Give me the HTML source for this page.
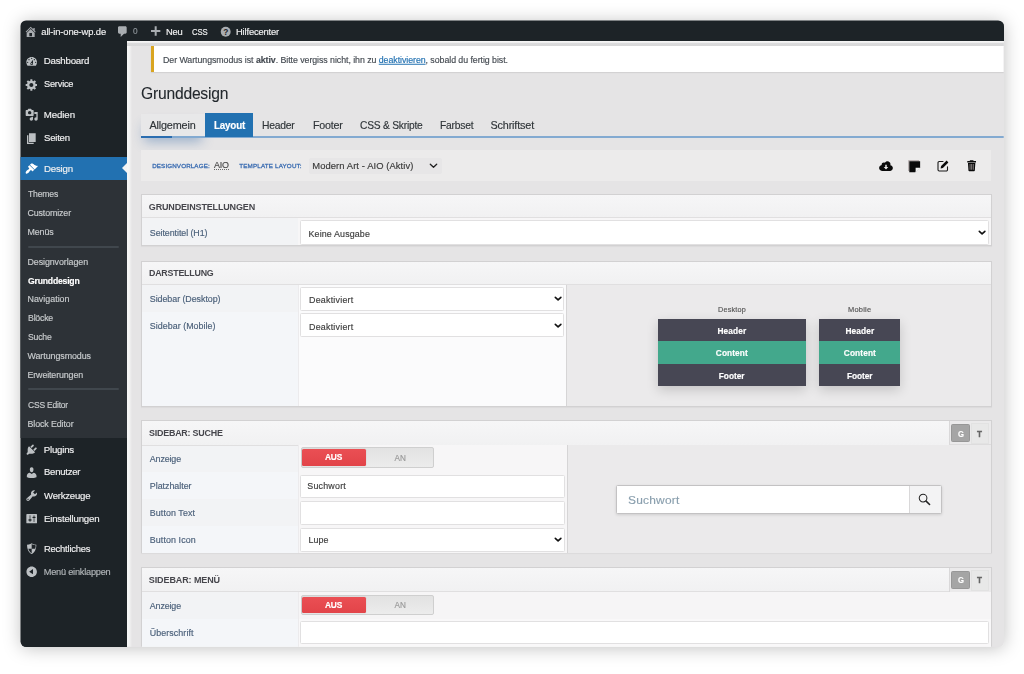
<!DOCTYPE html>
<html lang="de"><head><meta charset="utf-8"><title>Grunddesign</title>
<style>
*{box-sizing:border-box;margin:0;padding:0}
html,body{width:1024px;height:674px;overflow:hidden;background:#fff}
body{font-family:"Liberation Sans",sans-serif;position:relative;-webkit-font-smoothing:antialiased}
#shadow{position:absolute;left:20.5px;top:20.5px;width:983.2px;height:626.3px;border-radius:5.5px;background:linear-gradient(#1d2327 20.5px,rgba(0,0,0,0) 20.5px),linear-gradient(90deg,#1d2327 106.5px,#e4e3e4 106.5px);box-shadow:0 1px 18px rgba(0,0,0,.25)}
.abs{position:absolute}
.t{position:absolute;white-space:nowrap;line-height:14px;height:14px;-webkit-text-stroke:.16px}
.panel{position:absolute;border:1px solid #d2d1d2;background:#f7f6f7;box-shadow:0 1px 1px rgba(0,0,0,.04)}
.inp{position:absolute;background:#fff;border:1px solid #e1e0e1;border-radius:1.5px}
svg{position:absolute;overflow:visible}
</style></head><body>
<div id="shadow"></div>
<div id="app" style="position:absolute;left:0;top:0;width:1024px;height:674px;clip-path:inset(20.5px 20.3px 27.2px 20.5px round 5.5px)">
<div class="abs" style="left:127px;top:41px;width:877px;height:607px;background:#e5e4e5"></div>
<div class="abs" style="left:127px;top:41px;width:5px;height:607px;background:linear-gradient(90deg,#f7f7f7 0,#f5f5f5 40%,#e5e4e5 100%)"></div>
<div class="abs" style="left:20px;top:20px;width:984px;height:21px;background:#1d2327"></div>
<div class="abs" style="left:20px;top:41px;width:107px;height:607px;background:#1d2327"></div>
<div class="abs" style="left:20px;top:157px;width:107px;height:23px;background:#2271b1"></div>
<div class="abs" style="left:20px;top:180px;width:107px;height:258px;background:#2d3237"></div>
<div class="abs" style="left:121.6px;top:162.6px;width:0;height:0;border-top:5.9px solid transparent;border-bottom:5.9px solid transparent;border-right:5.6px solid #f3f3f3"></div>
<div class="abs" style="left:27.5px;top:246px;width:91.0px;height:2px;background:#40474d;border-radius:1px"></div>
<div class="abs" style="left:27.5px;top:388.3px;width:91.0px;height:2.0px;background:#40474d;border-radius:1px"></div>
<div class="abs" style="left:127px;top:41px;width:877px;height:5px;background:linear-gradient(#f6f6f6 0,#f2f2f2 28%,#dbdbdc 42%,#d8d8d9 100%)"></div>
<div class="abs" style="left:150.7px;top:45.5px;width:853.3px;height:26.5px;background:#fff;border-left:3px solid #d9a521;box-shadow:0 1px 1px rgba(0,0,0,.08)"></div>
<div class="abs" style="left:141px;top:113.5px;width:63.5px;height:23.5px;background:#e8e8e9;box-shadow:0 8px 12px -3px rgba(60,110,170,.42)"></div>
<div class="abs" style="left:141px;top:135.8px;width:863px;height:1.8px;background:linear-gradient(#9cb9d6,#6a9bcc 50%,#9cb9d6)"></div>
<div class="abs" style="left:141px;top:135.5px;width:31px;height:2.3px;background:#2a6db0"></div>
<div class="abs" style="left:204.7px;top:113px;width:48.3px;height:24px;background:#2271b1"></div>
<div class="abs" style="left:141px;top:150px;width:850px;height:30.5px;background:#ecebeb"></div>
<div class="abs" style="left:308.5px;top:158px;width:133.0px;height:16px;background:#e7e6e7;border-radius:2px"></div>
<div class="abs" style="left:214.3px;top:169.3px;width:14.7px;height:1.0px;border-top:1px dotted #6a6a6a"></div>
<div class="panel" style="left:141px;top:193.7px;width:850.5px;height:52.7px;"></div>
<div class="abs" style="left:142px;top:194.7px;width:848.5px;height:23.7px;background:linear-gradient(#f6f6f7,#f1f1f2);border-bottom:1px solid #e0dfe0"></div>
<div class="abs" style="left:142px;top:218.4px;width:156px;height:27.0px;background:#f2f3f5"></div>
<div class="inp" style="left:299.5px;top:220px;width:689.8px;height:24.5px;"></div>
<div class="panel" style="left:141px;top:260.5px;width:850.5px;height:146.0px;"></div>
<div class="abs" style="left:142px;top:261.5px;width:848.5px;height:23.0px;background:linear-gradient(#f6f6f7,#f1f1f2);border-bottom:1px solid #e0dfe0"></div>
<div class="abs" style="left:142px;top:284.5px;width:156px;height:27.0px;background:#f2f3f5"></div>
<div class="abs" style="left:142px;top:311.5px;width:156px;height:94.0px;background:#f4f6f9"></div>
<div class="abs" style="left:298px;top:284.5px;width:268px;height:121.0px;background:#fbfbfc;border-left:1px solid #ecebed"></div>
<div class="abs" style="left:566px;top:284.5px;width:424.5px;height:121.0px;background:#ebeaeb;border-left:1px solid #d6d5d6"></div>
<div class="inp" style="left:299.5px;top:287px;width:264.8px;height:23.5px;"></div>
<div class="inp" style="left:299.5px;top:313.4px;width:264.8px;height:24.1px;"></div>
<div class="abs" style="left:657.7px;top:319px;width:148.3px;height:66.8px;background:#474754;box-shadow:0 4px 11px rgba(0,0,0,.17)"></div>
<div class="abs" style="left:657.7px;top:341.3px;width:148.3px;height:22.7px;background:#43a88c"></div>
<div class="abs" style="left:819.3px;top:319px;width:80.7px;height:66.8px;background:#474754;box-shadow:0 4px 11px rgba(0,0,0,.17)"></div>
<div class="abs" style="left:819.3px;top:341.3px;width:80.7px;height:22.7px;background:#43a88c"></div>
<div class="panel" style="left:141px;top:420.3px;width:850.5px;height:133.2px;"></div>
<div class="abs" style="left:142px;top:421.3px;width:848.5px;height:24.7px;background:linear-gradient(#f6f6f7,#f1f1f2);border-bottom:1px solid #e0dfe0"></div>
<div class="abs" style="left:142px;top:446px;width:156px;height:26px;background:#f2f3f5"></div>
<div class="abs" style="left:142px;top:472px;width:156px;height:27px;background:#f4f6f9"></div>
<div class="abs" style="left:142px;top:499px;width:156px;height:27px;background:#f2f3f5"></div>
<div class="abs" style="left:142px;top:526px;width:156px;height:26.5px;background:#f4f6f9"></div>
<div class="abs" style="left:298px;top:445px;width:268.5px;height:107.5px;background:#f7f6f7;border-left:1px solid #ecebed"></div>
<div class="abs" style="left:566.5px;top:445px;width:424.0px;height:107.5px;background:#ebeaeb;border-left:1px solid #d6d5d6"></div>
<div class="abs" style="left:300.5px;top:447.4px;width:133.3px;height:20.2px;background:linear-gradient(#e2e2e2,#ececec);border:1px solid #cfcfcf;border-radius:2px"></div>
<div class="abs" style="left:302.2px;top:449.09999999999997px;width:63.8px;height:16.8px;background:linear-gradient(#ea4f54,#e24449);border-radius:1.5px;box-shadow:0 0 1px rgba(0,0,0,.3)"></div>
<div class="inp" style="left:299.5px;top:475px;width:265.0px;height:22.7px;"></div>
<div class="inp" style="left:299.5px;top:501px;width:265.0px;height:23.6px;"></div>
<div class="inp" style="left:299.5px;top:527.5px;width:265.0px;height:24.3px;"></div>
<div class="abs" style="left:948.5px;top:421.3px;width:42.0px;height:24.2px;background:#ebeaeb;border-left:1px solid #d9d8d9;border-bottom:1px solid #dddcdd"></div>
<div class="abs" style="left:951.3px;top:424.0px;width:18.4px;height:17.9px;background:#a5a5a5;border:1px solid #979797;border-radius:1.5px"></div>
<div class="abs" style="left:970.7px;top:422.5px;width:18.5px;height:21.0px;background:#e8e8e8;border:1px solid #e2e2e2"></div>
<div class="abs" style="left:616.2px;top:485px;width:325.6px;height:28.5px;background:#fff;border:1px solid #c3c2c3;border-radius:1.5px;box-shadow:0 1px 3px rgba(0,0,0,.12)"></div>
<div class="abs" style="left:909px;top:486px;width:31.8px;height:26.5px;background:#f3f3f4;border-left:1px solid #d9d8d9"></div>
<div class="panel" style="left:141px;top:567.4px;width:850.5px;height:92.6px;"></div>
<div class="abs" style="left:142px;top:568.4px;width:848.5px;height:23.6px;background:linear-gradient(#f6f6f7,#f1f1f2);border-bottom:1px solid #e0dfe0"></div>
<div class="abs" style="left:948.5px;top:568.4px;width:42.0px;height:24.2px;background:#ebeaeb;border-left:1px solid #d9d8d9;border-bottom:1px solid #dddcdd"></div>
<div class="abs" style="left:951.3px;top:571.1px;width:18.4px;height:17.9px;background:#a5a5a5;border:1px solid #979797;border-radius:1.5px"></div>
<div class="abs" style="left:970.7px;top:569.6px;width:18.5px;height:21.0px;background:#e8e8e8;border:1px solid #e2e2e2"></div>
<div class="abs" style="left:142px;top:592px;width:156px;height:27px;background:#f2f3f5"></div>
<div class="abs" style="left:142px;top:619px;width:156px;height:40px;background:#f4f6f9"></div>
<div class="abs" style="left:298px;top:592px;width:692.5px;height:27px;background:#f6f5f6;border-left:1px solid #ecebed"></div>
<div class="abs" style="left:298px;top:619px;width:692.5px;height:40px;background:#f9f8f9;border-left:1px solid #ecebed"></div>
<div class="abs" style="left:300.5px;top:595px;width:133.3px;height:20.2px;background:linear-gradient(#e2e2e2,#ececec);border:1px solid #cfcfcf;border-radius:2px"></div>
<div class="abs" style="left:302.2px;top:596.7px;width:63.8px;height:16.8px;background:linear-gradient(#ea4f54,#e24449);border-radius:1.5px;box-shadow:0 0 1px rgba(0,0,0,.3)"></div>
<div class="inp" style="left:299.5px;top:620.5px;width:689.2px;height:23.4px;"></div>
<svg viewBox="0 0 20 20" style="left:24.32px;top:24.62px;width:13.36px;height:13.36px" fill="#a9adb1"><path d="M16 8.5l1.53 1.53-1.06 1.06L10 4.62l-6.47 6.47-1.06-1.06L10 2.5l4 4v-2h2v4zm-6-2.46l6 5.99V18H4v-5.97zM12 17v-5H8v5h4z"/></svg>
<svg viewBox="0 0 20 20" style="left:115.62px;top:24.62px;width:13.36px;height:13.36px" fill="#a9adb1"><path d="M5 2h9c1.1 0 2 .9 2 2v7c0 1.1-.9 2-2 2h-2l-5 5v-5H5c-1.1 0-2-.9-2-2V4c0-1.1.9-2 2-2z"/></svg>
<svg viewBox="0 0 20 20" style="left:148.82px;top:24.82px;width:13.36px;height:13.36px" fill="#a9adb1"><path d="M17 7.5v3h-5.5V16h-3v-5.500H3v-3h5.500V2h3v5.500H17z"/></svg>
<svg viewBox="0 0 20 20" style="left:219.0px;top:24.5px;width:13.4px;height:13.4px"><circle cx="10" cy="10" r="7.4" fill="#a9adb1"/><text x="10" y="14.600" text-anchor="middle" font-family="Liberation Sans, sans-serif" font-weight="700" font-size="12.500" fill="#1d2327">?</text></svg>
<svg viewBox="0 0 20 20" style="left:24.82px;top:54.62px;width:13.36px;height:13.36px" fill="#bcc0c3"><path d="M3.76 16h12.48c1.1-1.37 1.76-3.11 1.76-5 0-4.42-3.58-8-8-8s-8 3.58-8 8c0 1.89.66 3.63 1.760 5zM10 4c.55 0 1 .45 1 1s-.45 1-1 1-1-.45-1-1 .45-1 1-1zM6 6c.55 0 1 .45 1 1s-.45 1-1 1-1-.45-1-1 .45-1 1-1zm8 0c.55 0 1 .45 1 1s-.45 1-1 1-1-.45-1-1 .45-1 1-1zm-5.37 5.55L12 7v6c0 1.1-.9 2-2 2s-2-.9-2-2c0-.57.24-1.080.63-1.45zM4 10c.55 0 1 .45 1 1s-.45 1-1 1-1-.45-1-1 .45-1 1-1zm12 0c.55 0 1 .45 1 1s-.45 1-1 1-1-.45-1-1 .45-1 1-1zm-5 3c0-.55-.45-1-1-1s-1 .45-1 1 .45 1 1 1 1-.45 1-1z"/></svg>
<svg viewBox="0 0 20 20" style="left:24.82px;top:77.62px;width:13.36px;height:13.36px" fill="#bcc0c3"><path d="M18 12h-2.180c-.17.7-.44 1.35-.81 1.93l1.540 1.540-2.100 2.100-1.540-1.540c-.58.36-1.23.63-1.910.79V19H8v-2.180c-.68-.16-1.330-.43-1.910-.79l-1.540 1.540-2.120-2.120 1.540-1.540c-.36-.58-.63-1.230-.79-1.910H1V9.030h2.170c.16-.7.44-1.350.8-1.940L2.430 5.550l2.100-2.100 1.540 1.540c.58-.37 1.240-.64 1.930-.81V2h3v2.180c.68.16 1.330.43 1.910.79l1.540-1.540 2.120 2.120-1.540 1.540c.36.59.63 1.240.79 1.930H18V12zm-8.500 1.500c1.660 0 3-1.340 3-3s-1.340-3-3-3-3 1.340-3 3 1.340 3 3 3z"/></svg>
<svg viewBox="0 0 20 20" style="left:24.82px;top:108.02px;width:13.36px;height:13.36px" fill="#bcc0c3"><path d="M13 11V4c0-.55-.45-1-1-1h-1.670L9 1H5L3.670 3H2c-.55 0-1 .45-1 1v7c0 .55.45 1 1 1h10c.55 0 1-.45 1-1zM7 4.500c1.380 0 2.500 1.120 2.500 2.500S8.380 9.500 7 9.500 4.500 8.380 4.500 7 5.620 4.500 7 4.500zM14 6h5v10.500c0 1.380-1.120 2.500-2.500 2.500S14 17.880 14 16.500s1.120-2.500 2.500-2.500c.17 0 .34.020.5.050V9h-3V6zm-4 8.050V13h2v3.500c0 1.380-1.120 2.500-2.500 2.500S7 17.880 7 16.500 8.120 14 9.500 14c.17 0 .34.020.5.050z"/></svg>
<svg viewBox="0 0 20 20" style="left:24.82px;top:131.52px;width:13.36px;height:13.36px" fill="#bcc0c3"><path d="M6 15V2h10v13H6zm-1 1h8v2H3V5h2v11z"/></svg>
<svg viewBox="0 0 20 20" style="left:24.82px;top:161.62px;width:13.36px;height:13.36px" fill="#fff"><path d="M14.480 11.060L7.410 3.990l1.500-1.500c.5-.56 2.300-.47 3.510.32 1.210.8 1.430 1.280 2.910 2.100 1.180.64 2.450 1.260 4.450.85zm-.71.71L6.700 4.700 4.930 6.470c-.39.39-.39 1.020 0 1.410l1.060 1.060c.39.39.39 1.030 0 1.420-.6.6-1.430 1.110-2.210 1.690-.35.26-.7.53-1.010.84C1.430 14.230.4 16.080 1.400 17.070c.99 1 2.840-.03 4.180-1.360.31-.31.580-.66.85-1.020.57-.78 1.080-1.610 1.690-2.210.39-.39 1.020-.39 1.410 0l1.060 1.060c.39.39 1.020.39 1.410 0z"/></svg>
<svg viewBox="0 0 20 20" style="left:24.82px;top:443.32px;width:13.36px;height:13.36px" fill="#bcc0c3"><path d="M13.110 4.360L9.870 7.600 8 5.730l3.240-3.240c.35-.34 1.050-.2 1.560.32.52.51.66 1.210.31 1.550zm-8 1.770l.91-1.120 9.010 9.010-1.190.84c-.71.71-2.630 1.160-3.820 1.160H6.140L4.900 17.260c-.59.59-1.540.59-2.120 0-.59-.58-.59-1.530 0-2.120l1.240-1.240v-3.880c0-1.130.4-3.190 1.090-3.890zm7.260 3.970l3.240-3.240c.34-.35 1.040-.21 1.550.31.520.51.660 1.210.31 1.550l-3.240 3.250z"/></svg>
<svg viewBox="0 0 20 20" style="left:24.82px;top:465.82px;width:13.36px;height:13.36px" fill="#bcc0c3"><path d="M10 9.250c-2.270 0-2.730-3.440-2.730-3.440C7 4.020 7.820 2 9.970 2c2.160 0 2.980 2.020 2.710 3.810 0 0-.41 3.440-2.680 3.440zm0 2.570L12.720 10c2.390 0 4.520 2.330 4.520 4.530v2.490s-3.650 1.130-7.240 1.130c-3.650 0-7.240-1.130-7.240-1.130v-2.490c0-2.250 1.940-4.480 4.470-4.480z"/></svg>
<svg viewBox="0 0 20 20" style="left:24.82px;top:489.32px;width:13.36px;height:13.36px" fill="#bcc0c3"><path d="M16.680 9.770c-1.340 1.340-3.300 1.670-4.950.99l-5.410 6.520c-.99.99-2.590.99-3.580 0s-.99-2.590 0-3.570l6.520-5.420c-.68-1.650-.35-3.610.99-4.950 1.280-1.280 3.120-1.620 4.720-1.060l-2.890 2.890 2.820 2.820 2.860-2.870c.53 1.580.18 3.390-1.080 4.650zM3.810 16.210c.4.39 1.040.39 1.430 0 .4-.4.4-1.040 0-1.430-.39-.4-1.030-.4-1.430 0-.39.39-.39 1.030 0 1.430z"/></svg>
<svg viewBox="0 0 20 20" style="left:24.82px;top:512.22px;width:13.36px;height:13.36px" fill="#bcc0c3"><path d="M18 16V4c0-.55-.45-1-1-1H3c-.55 0-1 .45-1 1v12c0 .55.45 1 1 1h14c.55 0 1-.45 1-1zM8 11h1c.55 0 1 .45 1 1s-.45 1-1 1H8v1.500c0 .28-.22.5-.5.5s-.5-.22-.5-.5V13H6c-.55 0-1-.45-1-1s.45-1 1-1h1V5.500c0-.28.22-.5.5-.5s.5.22.5.5V11zm5-2h-1c-.55 0-1-.45-1-1s.45-1 1-1h1V5.500c0-.28.22-.5.5-.5s.5.22.5.5V7h1c.55 0 1 .45 1 1s-.45 1-1 1h-1v5.500c0 .28-.22.5-.5.5s-.5-.22-.5-.5V9z"/></svg>
<svg viewBox="0 0 20 20" style="left:24.82px;top:542.32px;width:13.36px;height:13.36px" fill="#bcc0c3"><path d="M10 2s3 2 7 2c0 11-7 14-7 14S3 15 3 4c4 0 7-2 7-2zm0 8h5s1-1 1-5c0 0-5-1-6-2v7H5c1 4 5 7 5 7v-7z"/></svg>
<svg viewBox="0 0 20 20" style="left:24.82px;top:564.92px;width:13.36px;height:13.36px" fill="#bcc0c3"><path d="M10 2.160c4.330 0 7.840 3.510 7.840 7.840s-3.510 7.840-7.840 7.840S2.160 14.330 2.160 10 5.670 2.160 10 2.160zm2 11.720V6.120L6.180 9.970z"/></svg>
<svg viewBox="0 0 28 20" style="left:879.2px;top:161.2px;width:14px;height:10px"><path fill="#0a0a0a" d="M22.600 8.400C22.800 7.800 23 7.100 23 6.400 23 3 20.300 0.300 17 0.300c-2.300 0-4.300 1.300-5.300 3.200C11.100 3.100 10.400 2.900 9.600 2.900 7.200 2.900 5.300 4.800 5.300 7.200c0 .3 0 .6.100.9C2.400 8.700.2 11.200.2 14.200c0 3.200 2.600 5.600 5.800 5.600h16c2.900 0 5.700-2.300 5.700-5.800 0-2.700-2.100-5.100-5.100-5.600z"/><path fill="#ecebeb" d="M12.500 7.500h3v4.700h3L14 16.800 9.500 12.200h3z"/></svg>
<svg viewBox="0 0 24 24" style="left:908.3px;top:159.8px;width:12.400px;height:12.400px"><path fill="#a9a0a0" d="M0.500 0.500h21v2h-19v19h-2z"/><path fill="#0a0a0a" d="M2.500 2.500h21v11.500l-9.500 9.500h-11.500z"/><path fill="#f2f2f2" d="M14.800 14.800h8.700l-8.700 8.700z"/></svg>
<svg viewBox="0 0 24 24" style="left:937.2px;top:159.600px;width:12px;height:12px" fill="none"><path stroke="#1a1a1a" stroke-width="2.200" stroke-linecap="round" stroke-linejoin="round" d="M21 13.500V19.500a2.500 2.500 0 0 1-2.500 2.500H4.500A2.500 2.500 0 0 1 2 19.500V5.500A2.500 2.500 0 0 1 4.500 3H12"/><path fill="#0a0a0a" d="M19.200 1.200l3.600 3.600-11 11-4.600 1 1-4.600z"/></svg>
<svg viewBox="0 0 18 22" style="left:966.6px;top:159.800px;width:9.300px;height:11.300px"><path fill="#0a0a0a" d="M6 0.500h6l1 1.500h4.500v3h-17v-3H5zM1.800 6h14.400l-1 14.500c-.1.800-.7 1.400-1.500 1.400H4.300c-.8 0-1.400-.6-1.500-1.400z"/><path fill="#8a8484" d="M5 8h1.800v11H5zM8.100 8h1.800v11H8.100zM11.200 8H13v11h-1.800z"/></svg>
<svg viewBox="0 0 7 3.8" style="left:429.5px;top:164.4px;width:7px;height:3.8px" fill="none"><path d="M0.300 0.300L3.5 3.3L6.7 0.300" stroke="#222" stroke-width="1.3" stroke-linecap="round" stroke-linejoin="round"/></svg>
<svg viewBox="0 0 6.2 3.4" style="left:979.3px;top:231.3px;width:6.2px;height:3.4px" fill="none"><path d="M0.300 0.300L3.1 2.9L5.9 0.300" stroke="#111" stroke-width="1.6" stroke-linecap="round" stroke-linejoin="round"/></svg>
<svg viewBox="0 0 6.2 3.4" style="left:554.6px;top:296.9px;width:6.2px;height:3.4px" fill="none"><path d="M0.300 0.300L3.1 2.9L5.9 0.300" stroke="#111" stroke-width="1.6" stroke-linecap="round" stroke-linejoin="round"/></svg>
<svg viewBox="0 0 6.2 3.4" style="left:554.6px;top:323.7px;width:6.2px;height:3.4px" fill="none"><path d="M0.300 0.300L3.1 2.9L5.9 0.300" stroke="#111" stroke-width="1.6" stroke-linecap="round" stroke-linejoin="round"/></svg>
<svg viewBox="0 0 6.2 3.4" style="left:554.6px;top:538.3px;width:6.2px;height:3.4px" fill="none"><path d="M0.300 0.300L3.1 2.9L5.9 0.300" stroke="#111" stroke-width="1.6" stroke-linecap="round" stroke-linejoin="round"/></svg>
<svg viewBox="0 0 24 24" style="left:918.400px;top:492.900px;width:12.800px;height:12.800px" fill="none" stroke="#222" stroke-width="1.900" stroke-linecap="round"><circle cx="9.500" cy="9.500" r="7.200"/><path d="M15.200 15.200l6.500 6.500" stroke-width="2.800"/></svg>
<div style="position:absolute;left:0;top:0;width:1024px;height:674px;will-change:transform">
<div class="t" style="left:41.3px;top:24px;font-size:9.4px;font-weight:400;color:#f0f0f1;letter-spacing:-0.125px;transform:translateY(0.57px) scaleX(1);transform-origin:0 50%;">all-in-one-wp.de</div>
<div class="t" style="left:133px;top:24px;font-size:8.6px;font-weight:400;color:#8f959a;letter-spacing:-0.22px;transform:translateY(0.48px) scaleX(0.9646);transform-origin:0 50%;">0</div>
<div class="t" style="left:165.5px;top:24px;font-size:9.4px;font-weight:400;color:#f0f0f1;letter-spacing:-0.22px;transform:translateY(0.57px) scaleX(0.9974);transform-origin:0 50%;">Neu</div>
<div class="t" style="left:191.6px;top:24px;font-size:9.4px;font-weight:400;color:#f0f0f1;letter-spacing:-0.22px;transform:translateY(0.57px) scaleX(0.827);transform-origin:0 50%;">CSS</div>
<div class="t" style="left:236px;top:24px;font-size:9.4px;font-weight:400;color:#f0f0f1;letter-spacing:-0.165px;transform:translateY(0.57px) scaleX(1);transform-origin:0 50%;">Hilfecenter</div>
<div class="t" style="left:43.7px;top:54px;font-size:9.7px;font-weight:400;color:#f0f0f1;letter-spacing:-0.201px;transform:translateY(0.37px) scaleX(1);transform-origin:0 50%;">Dashboard</div>
<div class="t" style="left:43.7px;top:77px;font-size:9.7px;font-weight:400;color:#f0f0f1;letter-spacing:-0.22px;transform:translateY(0.47px) scaleX(0.9521);transform-origin:0 50%;">Service</div>
<div class="t" style="left:43.7px;top:107px;font-size:9.7px;font-weight:400;color:#f0f0f1;letter-spacing:-0.08px;transform:translateY(0.67px) scaleX(1);transform-origin:0 50%;">Medien</div>
<div class="t" style="left:43.7px;top:131px;font-size:9.7px;font-weight:400;color:#f0f0f1;letter-spacing:-0.22px;transform:translateY(0.17px) scaleX(0.9867);transform-origin:0 50%;">Seiten</div>
<div class="t" style="left:43.7px;top:161px;font-size:9.7px;font-weight:400;color:#f0f0f1;letter-spacing:-0.22px;transform:translateY(0.67px) scaleX(0.9987);transform-origin:0 50%;">Design</div>
<div class="t" style="left:43.7px;top:442px;font-size:9.7px;font-weight:400;color:#f0f0f1;letter-spacing:-0.212px;transform:translateY(0.67px) scaleX(1);transform-origin:0 50%;">Plugins</div>
<div class="t" style="left:43.7px;top:465px;font-size:9.7px;font-weight:400;color:#f0f0f1;letter-spacing:-0.22px;transform:translateY(0.47px) scaleX(0.9805);transform-origin:0 50%;">Benutzer</div>
<div class="t" style="left:43.7px;top:489px;font-size:9.7px;font-weight:400;color:#f0f0f1;letter-spacing:-0.22px;transform:translateY(0.17px) scaleX(0.9883);transform-origin:0 50%;">Werkzeuge</div>
<div class="t" style="left:43.7px;top:512px;font-size:9.7px;font-weight:400;color:#f0f0f1;letter-spacing:-0.22px;transform:translateY(0.37px) scaleX(0.9998);transform-origin:0 50%;">Einstellungen</div>
<div class="t" style="left:43.7px;top:542px;font-size:9.7px;font-weight:400;color:#f0f0f1;letter-spacing:-0.22px;transform:translateY(0.37px) scaleX(0.9715);transform-origin:0 50%;">Rechtliches</div>
<div class="t" style="left:43.7px;top:565px;font-size:9.2px;font-weight:400;color:#b2b6b9;letter-spacing:-0.212px;transform:translateY(0.49px) scaleX(1);transform-origin:0 50%;">Menü einklappen</div>
<div class="t" style="left:27.5px;top:187px;font-size:8.9px;font-weight:400;color:#c9ccce;letter-spacing:-0.22px;transform:translateY(0.39px) scaleX(0.9758);transform-origin:0 50%;">Themes</div>
<div class="t" style="left:27.5px;top:206px;font-size:8.9px;font-weight:400;color:#c9ccce;letter-spacing:-0.139px;transform:translateY(0.19px) scaleX(1);transform-origin:0 50%;">Customizer</div>
<div class="t" style="left:27.5px;top:225px;font-size:8.9px;font-weight:400;color:#c9ccce;letter-spacing:-0.128px;transform:translateY(0.19px) scaleX(1);transform-origin:0 50%;">Menüs</div>
<div class="t" style="left:27.5px;top:254px;font-size:8.9px;font-weight:400;color:#c9ccce;letter-spacing:-0.084px;transform:translateY(0.89px) scaleX(1);transform-origin:0 50%;">Designvorlagen</div>
<div class="t" style="left:27.5px;top:273px;font-size:8.9px;font-weight:700;color:#fff;letter-spacing:-0.22px;transform:translateY(0.69px) scaleX(0.9751);transform-origin:0 50%;">Grunddesign</div>
<div class="t" style="left:27.5px;top:292px;font-size:8.9px;font-weight:400;color:#c9ccce;letter-spacing:0.006px;transform:translateY(0.39px) scaleX(1);transform-origin:0 50%;">Navigation</div>
<div class="t" style="left:27.5px;top:311px;font-size:8.9px;font-weight:400;color:#c9ccce;letter-spacing:-0.22px;transform:translateY(0.39px) scaleX(0.9873);transform-origin:0 50%;">Blöcke</div>
<div class="t" style="left:27.5px;top:330px;font-size:8.9px;font-weight:400;color:#c9ccce;letter-spacing:-0.22px;transform:translateY(0.19px) scaleX(0.9762);transform-origin:0 50%;">Suche</div>
<div class="t" style="left:27.5px;top:348px;font-size:8.9px;font-weight:400;color:#c9ccce;letter-spacing:-0.061px;transform:translateY(0.99px) scaleX(1);transform-origin:0 50%;">Wartungsmodus</div>
<div class="t" style="left:27.5px;top:368px;font-size:8.9px;font-weight:400;color:#c9ccce;letter-spacing:-0.133px;transform:translateY(0.49px) scaleX(1);transform-origin:0 50%;">Erweiterungen</div>
<div class="t" style="left:27.5px;top:397px;font-size:8.9px;font-weight:400;color:#c9ccce;letter-spacing:-0.22px;transform:translateY(0.59px) scaleX(0.9591);transform-origin:0 50%;">CSS Editor</div>
<div class="t" style="left:27.5px;top:416px;font-size:8.9px;font-weight:400;color:#c9ccce;letter-spacing:-0.113px;transform:translateY(0.59px) scaleX(1);transform-origin:0 50%;">Block Editor</div>
<div class="t" style="left:163px;top:52px;font-size:8.8px;font-weight:400;color:#454b52;letter-spacing:-0.052px;transform:translateY(0.75px) scaleX(1);transform-origin:0 50%;">Der Wartungsmodus ist <b>aktiv</b>. Bitte vergiss nicht, ihn zu <span style="color:#2271b1;text-decoration:underline">deaktivieren</span>, sobald du fertig bist.</div>
<div class="t" style="left:141.3px;top:87px;font-size:16.0px;font-weight:400;color:#23282d;letter-spacing:-0.22px;transform:translateY(0.13px) scaleX(0.9775);transform-origin:0 50%;-webkit-text-stroke:.1px">Grunddesign</div>
<div class="t" style="left:149.5px;top:117px;font-size:10.8px;font-weight:400;color:#2f3438;letter-spacing:-0.158px;transform:translateY(0.87px) scaleX(1);transform-origin:0 50%;">Allgemein</div>
<div class="t" style="left:213.5px;top:117px;font-size:10.8px;font-weight:700;color:#fff;letter-spacing:-0.22px;transform:translateY(0.87px) scaleX(0.9099);transform-origin:0 50%;">Layout</div>
<div class="t" style="left:262.2px;top:117px;font-size:10.8px;font-weight:400;color:#2f3438;letter-spacing:-0.22px;transform:translateY(0.87px) scaleX(0.956);transform-origin:0 50%;">Header</div>
<div class="t" style="left:312.7px;top:117px;font-size:10.8px;font-weight:400;color:#2f3438;letter-spacing:-0.22px;transform:translateY(0.87px) scaleX(0.99);transform-origin:0 50%;">Footer</div>
<div class="t" style="left:359.7px;top:117px;font-size:10.8px;font-weight:400;color:#2f3438;letter-spacing:-0.22px;transform:translateY(0.87px) scaleX(0.9463);transform-origin:0 50%;">CSS &amp; Skripte</div>
<div class="t" style="left:439.7px;top:117px;font-size:10.8px;font-weight:400;color:#2f3438;letter-spacing:-0.22px;transform:translateY(0.87px) scaleX(0.9495);transform-origin:0 50%;">Farbset</div>
<div class="t" style="left:490.5px;top:117px;font-size:10.8px;font-weight:400;color:#2f3438;letter-spacing:-0.152px;transform:translateY(0.87px) scaleX(1);transform-origin:0 50%;">Schriftset</div>
<div class="t" style="left:152.2px;top:159px;font-size:6.25px;font-weight:400;color:#3d6eb2;letter-spacing:0.12px;transform:translateY(0.44px) scaleX(1);transform-origin:0 50%;-webkit-text-stroke:.3px">DESIGNVORLAGE:</div>
<div class="t" style="left:214.1px;top:158px;font-size:9.5px;font-weight:400;color:#484848;letter-spacing:-0.22px;transform:translateY(0.0px) scaleX(0.9418);transform-origin:0 50%;">AIO</div>
<div class="t" style="left:239.2px;top:159px;font-size:6.25px;font-weight:400;color:#3d6eb2;letter-spacing:0.171px;transform:translateY(0.44px) scaleX(1);transform-origin:0 50%;-webkit-text-stroke:.3px">TEMPLATE LAYOUT:</div>
<div class="t" style="left:312.3px;top:158px;font-size:9.4px;font-weight:400;color:#3a3a3a;letter-spacing:0.092px;transform:translateY(0.97px) scaleX(1);transform-origin:0 50%;">Modern Art - AIO (Aktiv)</div>
<div class="t" style="left:148.8px;top:200px;font-size:9.0px;font-weight:700;color:#46464c;letter-spacing:-0.156px;transform:translateY(0.02px) scaleX(1);transform-origin:0 50%;-webkit-text-stroke:0">GRUNDEINSTELLUNGEN</div>
<div class="t" style="left:149.8px;top:225px;font-size:8.9px;font-weight:400;color:#4b607a;letter-spacing:-0.063px;transform:translateY(0.69px) scaleX(1);transform-origin:0 50%;">Seitentitel (H1)</div>
<div class="t" style="left:308.5px;top:226px;font-size:8.9px;font-weight:400;color:#3d3d3d;letter-spacing:0.137px;transform:translateY(0.69px) scaleX(1);transform-origin:0 50%;">Keine Ausgabe</div>
<div class="t" style="left:148.8px;top:266px;font-size:9.0px;font-weight:700;color:#46464c;letter-spacing:-0.22px;transform:translateY(0.22px) scaleX(0.9835);transform-origin:0 50%;-webkit-text-stroke:0">DARSTELLUNG</div>
<div class="t" style="left:149.8px;top:291px;font-size:8.9px;font-weight:400;color:#4b607a;letter-spacing:-0.049px;transform:translateY(0.79px) scaleX(1);transform-origin:0 50%;">Sidebar (Desktop)</div>
<div class="t" style="left:149.8px;top:318px;font-size:8.9px;font-weight:400;color:#4b607a;letter-spacing:0.036px;transform:translateY(0.59px) scaleX(1);transform-origin:0 50%;">Sidebar (Mobile)</div>
<div class="t" style="left:308.5px;top:292px;font-size:8.9px;font-weight:400;color:#3d3d3d;letter-spacing:0.22px;transform:translateY(0.69px) scaleX(1.0032);transform-origin:0 50%;">Deaktiviert</div>
<div class="t" style="left:308.5px;top:319px;font-size:8.9px;font-weight:400;color:#3d3d3d;letter-spacing:0.22px;transform:translateY(0.69px) scaleX(1.0032);transform-origin:0 50%;">Deaktiviert</div>
<div class="t" style="left:717.8px;top:302px;font-size:7.2px;font-weight:400;color:#555;letter-spacing:0.22px;transform:translateY(0.78px) scaleX(1.003);transform-origin:0 50%;">Desktop</div>
<div class="t" style="left:848px;top:302px;font-size:7.2px;font-weight:400;color:#555;letter-spacing:0.22px;transform:translateY(0.78px) scaleX(1.0352);transform-origin:0 50%;">Mobile</div>
<div class="t" style="left:717.5px;top:323px;font-size:8.3px;font-weight:700;color:#fff;letter-spacing:0.11px;transform:translateY(0.77px) scaleX(1);transform-origin:0 50%;">Header</div>
<div class="t" style="left:715.8px;top:345px;font-size:8.3px;font-weight:700;color:#fff;letter-spacing:0.094px;transform:translateY(0.97px) scaleX(1);transform-origin:0 50%;">Content</div>
<div class="t" style="left:718.8px;top:368px;font-size:8.3px;font-weight:700;color:#fff;letter-spacing:-0.019px;transform:translateY(0.77px) scaleX(1);transform-origin:0 50%;">Footer</div>
<div class="t" style="left:845.5px;top:323px;font-size:8.3px;font-weight:700;color:#fff;letter-spacing:0.11px;transform:translateY(0.77px) scaleX(1);transform-origin:0 50%;">Header</div>
<div class="t" style="left:843.8px;top:345px;font-size:8.3px;font-weight:700;color:#fff;letter-spacing:0.122px;transform:translateY(0.97px) scaleX(1);transform-origin:0 50%;">Content</div>
<div class="t" style="left:847px;top:368px;font-size:8.3px;font-weight:700;color:#fff;letter-spacing:-0.052px;transform:translateY(0.77px) scaleX(1);transform-origin:0 50%;">Footer</div>
<div class="t" style="left:148.8px;top:426px;font-size:9.0px;font-weight:700;color:#46464c;letter-spacing:-0.22px;transform:translateY(0.42px) scaleX(0.9901);transform-origin:0 50%;-webkit-text-stroke:0">SIDEBAR: SUCHE</div>
<div class="t" style="left:149.8px;top:452px;font-size:8.9px;font-weight:400;color:#4b607a;letter-spacing:-0.125px;transform:translateY(0.19px) scaleX(1);transform-origin:0 50%;">Anzeige</div>
<div class="t" style="left:149.8px;top:479px;font-size:8.9px;font-weight:400;color:#4b607a;letter-spacing:-0.022px;transform:translateY(0.19px) scaleX(1);transform-origin:0 50%;">Platzhalter</div>
<div class="t" style="left:149.8px;top:506px;font-size:8.9px;font-weight:400;color:#4b607a;letter-spacing:0.086px;transform:translateY(0.19px) scaleX(1);transform-origin:0 50%;">Button Text</div>
<div class="t" style="left:149.8px;top:533px;font-size:8.9px;font-weight:400;color:#4b607a;letter-spacing:0.099px;transform:translateY(0.19px) scaleX(1);transform-origin:0 50%;">Button Icon</div>
<div class="t" style="left:325px;top:450px;font-size:8.4px;font-weight:700;color:#fff;letter-spacing:-0.22px;transform:translateY(0.41px) scaleX(0.9984);transform-origin:0 50%;">AUS</div>
<div class="t" style="left:394.5px;top:451px;font-size:8.2px;font-weight:400;color:#9a9a9a;letter-spacing:0.062px;transform:translateY(0.54px) scaleX(1);transform-origin:0 50%;">AN</div>
<div class="t" style="left:307.3px;top:479px;font-size:8.9px;font-weight:400;color:#3d3d3d;letter-spacing:0.212px;transform:translateY(0.19px) scaleX(1);transform-origin:0 50%;">Suchwort</div>
<div class="t" style="left:308.5px;top:533px;font-size:8.9px;font-weight:400;color:#3d3d3d;letter-spacing:0.062px;transform:translateY(0.19px) scaleX(1);transform-origin:0 50%;">Lupe</div>
<div class="t" style="left:957.8px;top:426px;font-size:9.0px;font-weight:700;color:#fff;letter-spacing:-0.22px;transform:translateY(0.62px) scaleX(0.8535);transform-origin:0 50%;-webkit-text-stroke:.15px">G</div>
<div class="t" style="left:976.6px;top:426px;font-size:9.0px;font-weight:700;color:#666;letter-spacing:-0.22px;transform:translateY(0.62px) scaleX(0.9091);transform-origin:0 50%;-webkit-text-stroke:.3px">T</div>
<div class="t" style="left:628px;top:492px;font-size:11.7px;font-weight:400;color:#8a9fae;letter-spacing:0.22px;transform:translateY(0.99px) scaleX(1.0199);transform-origin:0 50%;">Suchwort</div>
<div class="t" style="left:148.8px;top:573px;font-size:9.0px;font-weight:700;color:#46464c;letter-spacing:-0.101px;transform:translateY(0.22px) scaleX(1);transform-origin:0 50%;-webkit-text-stroke:0">SIDEBAR: MENÜ</div>
<div class="t" style="left:149.8px;top:599px;font-size:8.9px;font-weight:400;color:#4b607a;letter-spacing:-0.125px;transform:translateY(0.39px) scaleX(1);transform-origin:0 50%;">Anzeige</div>
<div class="t" style="left:149.8px;top:625px;font-size:8.9px;font-weight:400;color:#4b607a;letter-spacing:0.072px;transform:translateY(0.69px) scaleX(1);transform-origin:0 50%;">Überschrift</div>
<div class="t" style="left:325px;top:598px;font-size:8.4px;font-weight:700;color:#fff;letter-spacing:-0.22px;transform:translateY(0.01px) scaleX(0.9984);transform-origin:0 50%;">AUS</div>
<div class="t" style="left:394.5px;top:599px;font-size:8.2px;font-weight:400;color:#9a9a9a;letter-spacing:0.062px;transform:translateY(0.14px) scaleX(1);transform-origin:0 50%;">AN</div>
<div class="t" style="left:957.8px;top:573px;font-size:9.0px;font-weight:700;color:#fff;letter-spacing:-0.22px;transform:translateY(0.02px) scaleX(0.8535);transform-origin:0 50%;-webkit-text-stroke:.15px">G</div>
<div class="t" style="left:976.6px;top:573px;font-size:9.0px;font-weight:700;color:#666;letter-spacing:-0.22px;transform:translateY(0.02px) scaleX(0.9091);transform-origin:0 50%;-webkit-text-stroke:.3px">T</div>
</div>
</div>
</body></html>
